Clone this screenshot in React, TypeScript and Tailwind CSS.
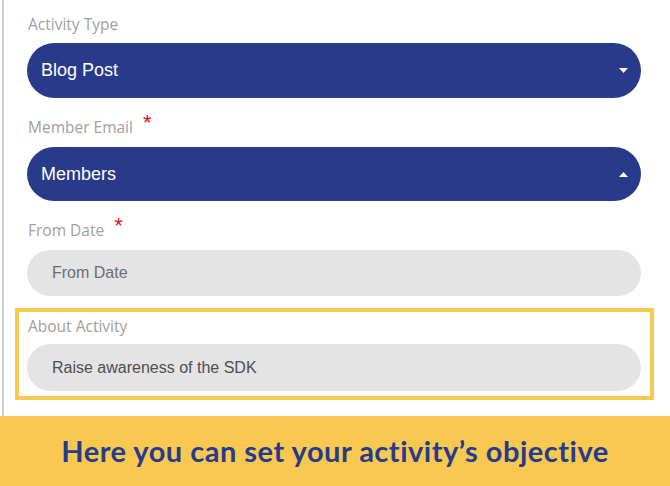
const Caret = ({ up }: { up?: boolean }) => (
    <svg width="9" height="5" viewBox="0 0 9 5" className="shrink-0">
        {up ? <polygon points="0,5 9,5 4.5,0" fill="#fff" /> : <polygon points="0,0 9,0 4.5,5" fill="#fff" />}
    </svg>
);

const Label = ({ text, required, className }: { text: string; required?: boolean; className?: string }) => (
    <div className={"flex h-[20px] items-center pl-[1px] text-[15.5px] leading-[20px] text-[#a0a0a0] font-['Open_Sans',sans-serif] " + (className ?? "")}>
        <span>{text}</span>
        {required && (
            <span className="relative -top-[4px] ml-[10px] text-[22px] leading-none text-[#e3101a] font-['Liberation_Sans',sans-serif]">*</span>
        )}
    </div>
);

const Select = ({ value, up, className }: { value: string; up?: boolean; className?: string }) => (
    <div className={"flex w-[614px] items-center justify-between rounded-full bg-[#293a8b] pl-[14px] pr-[13px] text-[18px] text-white font-['Liberation_Sans',sans-serif] " + (className ?? "")}>
        <span>{value}</span>
        <Caret up={up} />
    </div>
);

const Input = ({ value, className }: { value: string; className?: string }) => (
    <div className={"flex w-[614px] items-center rounded-full bg-[#e4e4e4] pl-[25px] text-[16px] font-['Liberation_Sans',sans-serif] " + (className ?? "")}>
        {value}
    </div>
);

export default function App() {
    return (
        <div className="flex h-[486px] w-[670px] flex-col bg-white">
            <div className="ml-[2px] flex h-[416px] flex-col border-l-2 border-[#cdcdcd] pl-[23px] pt-[14px]">
                <Label text="Activity Type" />
                <Select value="Blog Post" className="mt-[9px] h-[55px]" />

                <Label text="Member Email" required className="mt-[19px]" />
                <Select value="Members" up className="mt-[10px] h-[54px]" />

                <Label text="From Date" required className="mt-[19px]" />
                <Input value="From Date" className="mt-[10px] h-[46px] text-[#6e6e6e]" />

                <div className="-ml-[12px] mt-[12px] w-[639px] border-4 border-[#f8c94f] pb-[5px] pl-[8px] pt-[4px]">
                    <Label text="About Activity" />
                    <Input value="Raise awareness of the SDK" className="mt-[8px] h-[47px] text-[#4e4e4e]" />
                </div>
            </div>
            <div className="flex flex-1 items-center justify-center bg-[#f9c850]">
                <p className="text-[29px] font-bold tracking-[0.5px] text-[#263b8b] font-['Lato',sans-serif]">
                    Here you can set your activity’s objective
                </p>
            </div>
        </div>
    );
}
